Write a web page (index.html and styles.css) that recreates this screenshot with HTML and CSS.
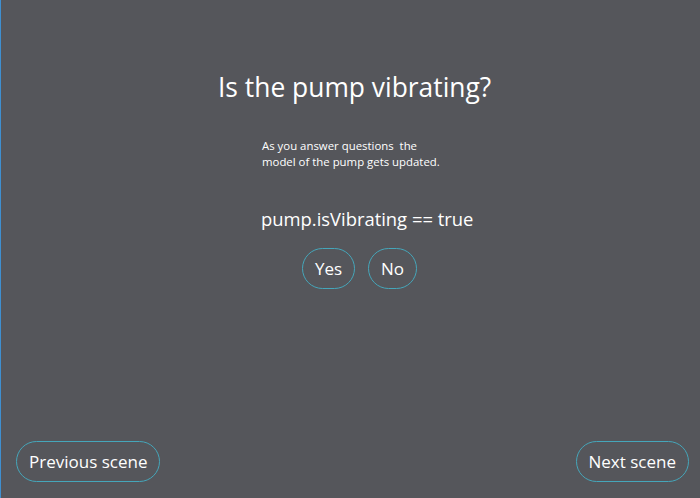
FILE: index.html
```html
<!DOCTYPE html>
<html>
<head>
<meta charset="utf-8">
<link rel="stylesheet" href="styles.css">
</head>
<body>
<div class="screen">
  <main class="content">
    <h1 class="title">Is the pump vibrating?</h1>
    <p class="desc">As you answer questions&nbsp; the<br>model of the pump gets updated.</p>
    <p class="expr">pump.isVibrating == true</p>
    <div class="answers">
      <button class="pill pill-yes">Yes</button>
      <button class="pill pill-no">No</button>
    </div>
  </main>
  <footer class="nav">
    <button class="pill nav-btn">Previous scene</button>
    <button class="pill nav-btn">Next scene</button>
  </footer>
</div>
</body>
</html>
```

FILE: styles.css
```css
html, body {
  margin: 0;
  padding: 0;
  height: 100%;
  background: #55565b;
}
body {
  font-family: "Open Sans", "Noto Sans", sans-serif;
  color: #ffffff;
}
.screen {
  height: 498px;
  display: flex;
  flex-direction: column;
  border-left: 1px solid #3f8fd0;
  box-sizing: border-box;
}
.content {
  flex: 1;
  display: flex;
  flex-direction: column;
  align-items: flex-start;
  padding-top: 70px;
}
.title {
  margin: 0 0 0 217px;
  font-size: 26.4px;
  font-weight: 400;
  line-height: 34px;
}
.desc {
  margin: 34px 0 0 261px;
  font-size: 11.4px;
  line-height: 16px;
}
.expr {
  margin: 37px 0 0 260px;
  font-size: 18.4px;
  line-height: 24px;
}
.answers {
  display: flex;
  gap: 13px;
  margin: 17px 0 0 301px;
}
.pill {
  font-family: inherit;
  color: #ffffff;
  background: transparent;
  border: 1px solid #45a6ba;
  border-radius: 999px;
  height: 41px;
  font-size: 17px;
  padding: 0;
  display: flex;
  align-items: center;
  justify-content: center;
}
.pill-yes { width: 53px; }
.pill-no { width: 49px; }
.nav {
  display: flex;
  justify-content: space-between;
  padding: 0 11px 16px 15px;
}
.nav-btn {
  padding: 0 12px;
}
```
